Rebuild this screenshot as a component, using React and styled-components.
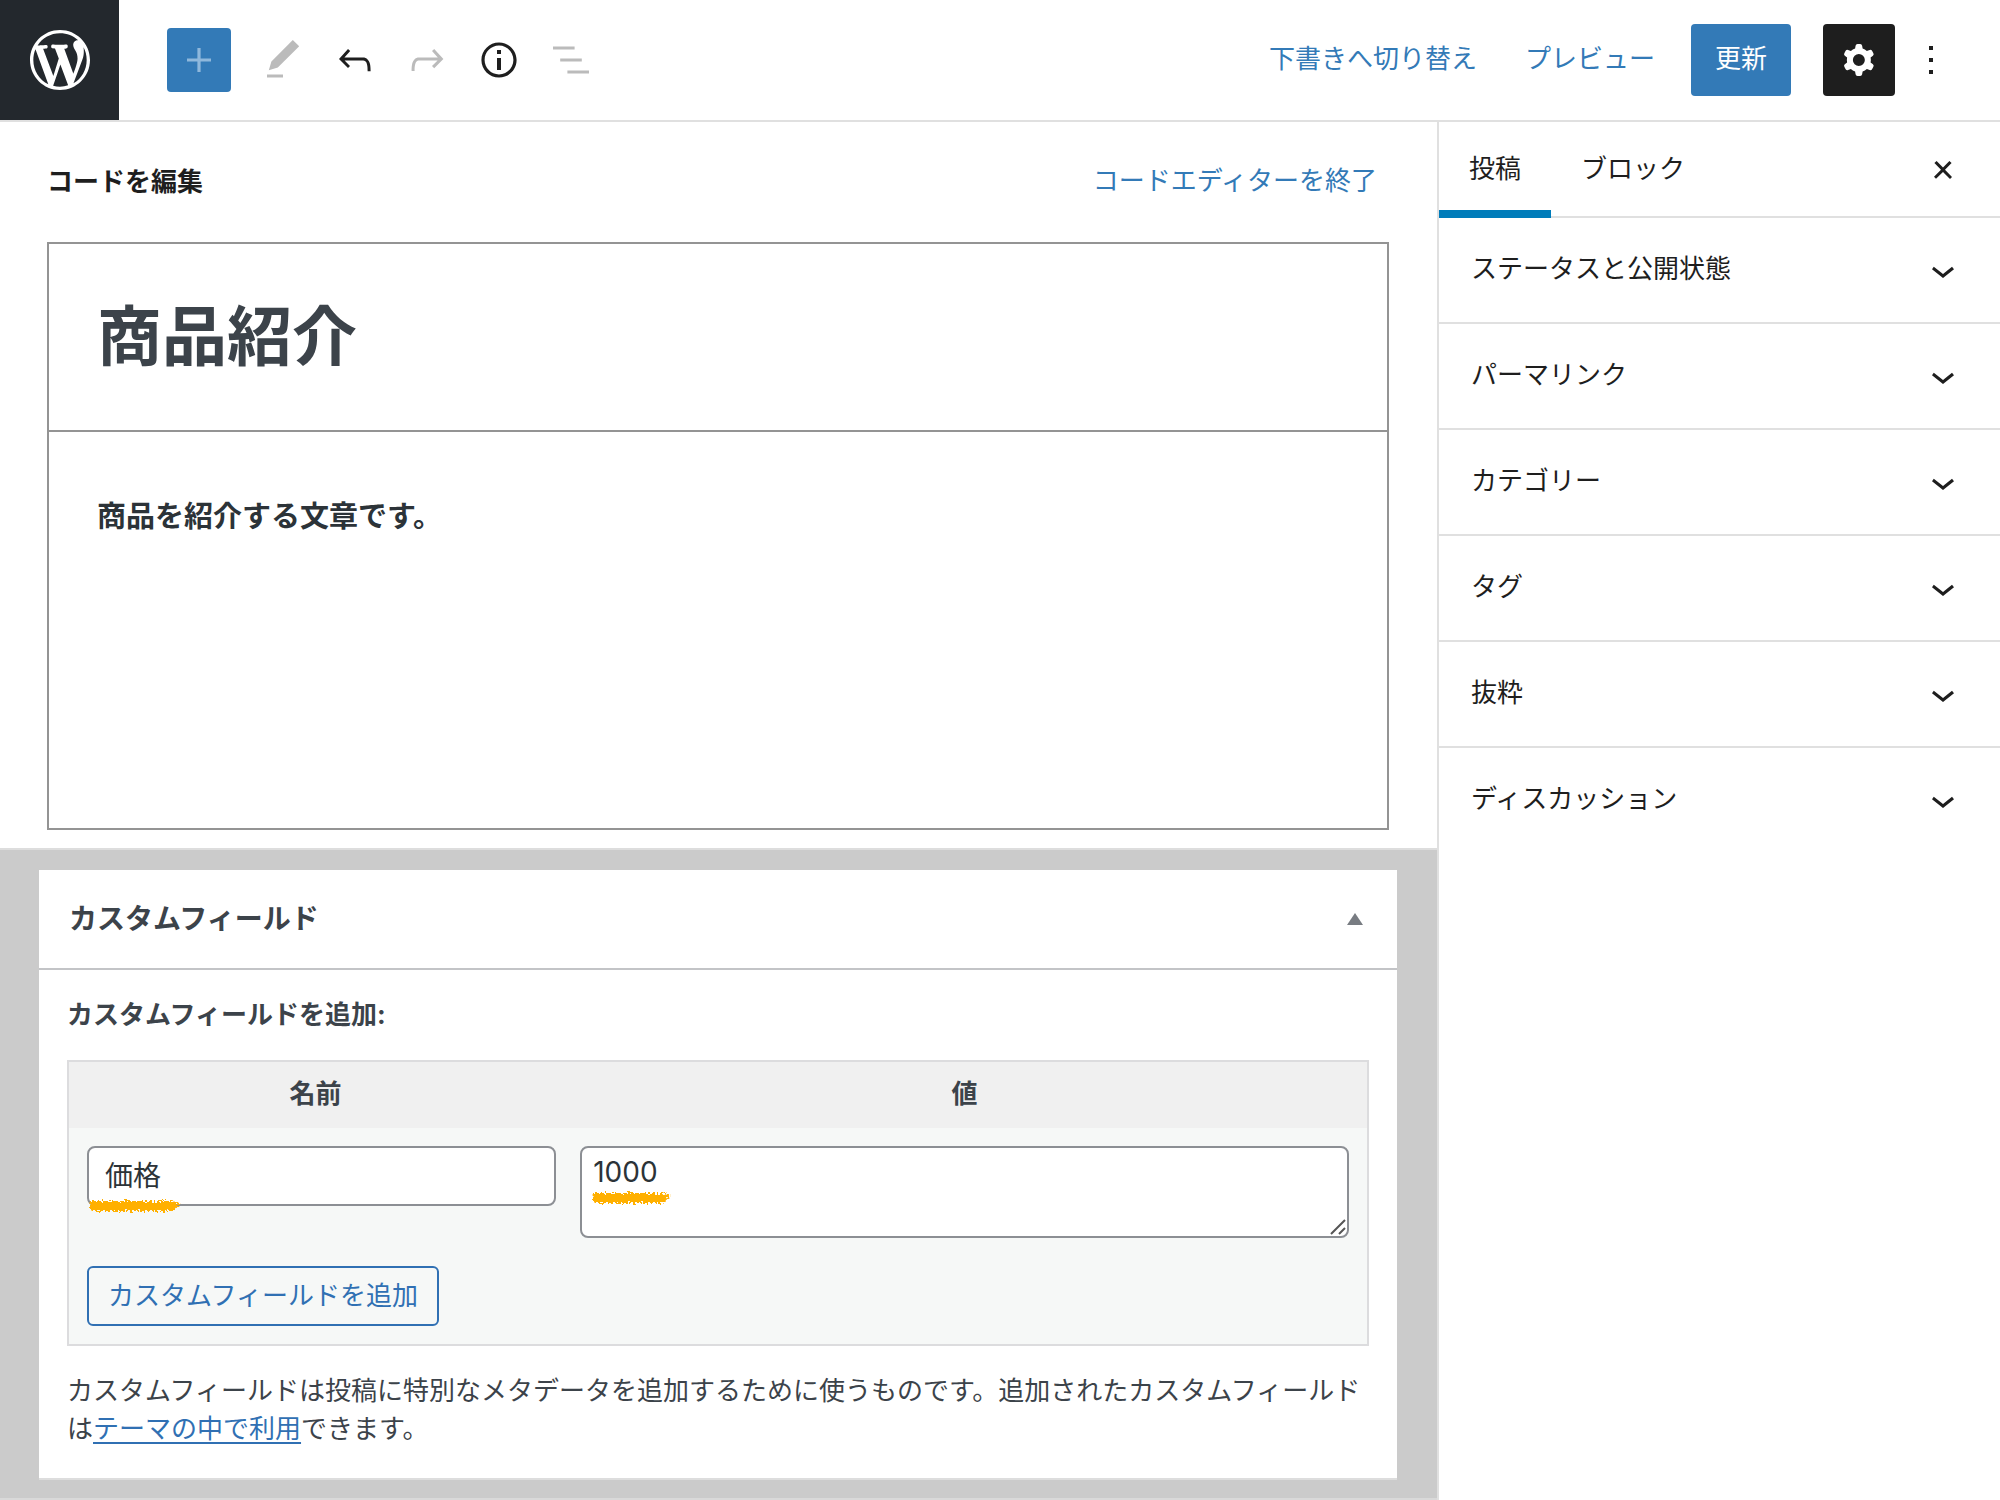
import React from "react";
import styled, { createGlobalStyle } from "styled-components";

const GlobalStyle = createGlobalStyle`
  *, *::before, *::after { box-sizing: border-box; }
  body {
    margin: 0;
    background: #fff;
    color: #1e1e1e;
    font-family: Inter, "Noto Sans CJK JP", sans-serif;
    font-size: 26px;
    line-height: 38px;
  }
  button, input, textarea { font: inherit; color: inherit; margin: 0; }
  button { background: none; border: 0; padding: 0; cursor: pointer; }
`;

const Page = styled.div`
  min-height: 100vh;
  display: flex;
  flex-direction: column;
`;

const Header = styled.header`
  display: flex;
  align-items: center;
  height: 122px;
  padding-right: 33px;
  border-bottom: 2px solid #e0e0e0;
`;

const Logo = styled.a`
  display: flex;
  align-items: center;
  justify-content: center;
  align-self: stretch;
  width: 119px;
  background: #23282d;
  color: #fff;
`;

const Toolbar = styled.div`
  display: flex;
  align-items: center;
  flex: 1;
  padding-left: 48px;
`;

const Actions = styled.div`
  display: flex;
  align-items: center;
`;

const InserterButton = styled.button`
  display: flex;
  align-items: center;
  justify-content: center;
  width: 64px;
  height: 64px;
  margin-right: 16px;
  border-radius: 4px;
  background: #337ab7;
  color: #8fb8dc;
`;

const IconButton = styled.button`
  display: flex;
  align-items: center;
  justify-content: center;
  width: 72px;
  height: 72px;
  border-radius: 4px;
  color: ${(p) => (p.$active ? "#fff" : p.disabled ? "#bbb" : "#1e1e1e")};
  background: ${(p) => (p.$active ? "#1e1e1e" : "transparent")};
`;

const TextButton = styled.button`
  height: 72px;
  padding: 0 24px 2px;
  color: #337ab7;
`;

const PrimaryButton = styled(TextButton)`
  margin: 0 32px 0 12px;
  border-radius: 4px;
  background: #337ab7;
  color: #fff;
`;

const Body = styled.div`
  display: grid;
  grid-template-columns: 1fr 563px;
  flex: 1;
`;

const Main = styled.main`
  display: flex;
  flex-direction: column;
  min-width: 0;
`;

const Editor = styled.section`
  padding: 0 48px 18px 47px;
`;

const EditorHead = styled.div`
  display: flex;
  align-items: center;
  justify-content: space-between;
  height: 120px;
`;

const EditorTitle = styled.h2`
  margin: 0;
  font-size: 26px;
  font-weight: 700;
`;

const ExitButton = styled.button`
  padding: 0 12px 2px;
  color: #337ab7;
`;

const TitleInput = styled.input`
  display: block;
  width: 100%;
  height: 190px;
  padding: 0 48px 10px;
  border: 2px solid #949494;
  border-radius: 0;
  color: #3c434a;
  font-size: 65px;
  font-weight: 700;
`;

const CodeArea = styled.textarea`
  display: block;
  width: 100%;
  height: 398px;
  padding: 66px 48px;
  border: 2px solid #949494;
  border-top: 0;
  border-radius: 0;
  color: #2c3338;
  font-size: 29px;
  font-weight: 600;
  resize: none;
`;

const MetaArea = styled.section`
  flex: 1;
  padding: 20px 40px 18px 39px;
  border-top: 2px solid #ddd;
  border-bottom: 2px solid #d9d9d9;
  background: #cbcbcb;
`;

const MetaBox = styled.div`
  border-bottom: 2px solid #ddd;
  background: #fff;
`;

const MetaHead = styled.div`
  display: flex;
  align-items: center;
  justify-content: space-between;
  height: 100px;
  padding: 0 34px 0 30px;
  border-bottom: 2px solid #c3c4c7;
`;

const MetaTitle = styled.h2`
  margin: 0;
  color: #3c434a;
  font-size: 28px;
  font-weight: 700;
`;

const ToggleButton = styled.button`
  display: flex;
  color: #787c82;
`;

const MetaBody = styled.div`
  padding: 26px 28px 30px;
  color: #3c434a;
`;

const AddHeading = styled.p`
  margin: 0 0 26px;
  font-weight: 700;
`;

const FieldTable = styled.table`
  width: 100%;
  table-layout: fixed;
  border: 2px solid #dcdcde;
  border-collapse: separate;
  border-spacing: 0;
  background: #f6f8f7;
`;

const HeadCell = styled.th`
  width: ${(p) => p.$width};
  height: 66px;
  padding: 0 0 2px;
  background: #f0f0f0;
  font-weight: 700;
  text-align: center;
`;

const Cell = styled.td`
  padding: ${(p) => p.$padding};
  vertical-align: top;
`;

const Field = styled.div`
  position: relative;
`;

const NameInput = styled.input`
  display: block;
  width: 100%;
  height: 60px;
  padding: 0 16px 4px;
  border: 2px solid #8c8f94;
  border-radius: 8px;
  background: #fff;
  color: #2c3338;
  font-size: 28px;
`;

const ValueArea = styled.textarea`
  display: block;
  width: 100%;
  height: 92px;
  padding: 5px 11px;
  border: 2px solid #8c8f94;
  border-radius: 8px;
  background: #fff;
  color: #2c3338;
  font-size: 28px;
  resize: none;
`;

const Grip = styled.svg`
  position: absolute;
  right: 3px;
  bottom: 3px;
  pointer-events: none;
`;

const Marker = styled.svg`
  position: absolute;
  left: ${(p) => p.$left}px;
  top: ${(p) => p.$top}px;
  overflow: visible;
  pointer-events: none;
`;

const AddButton = styled.button`
  height: 60px;
  padding: 0 19px;
  border: 2px solid #3070b3;
  border-radius: 6px;
  color: #3070b3;
`;

const Help = styled.p`
  margin: 26px 0 0;
`;

const HelpLink = styled.a`
  color: #3070b3;
  text-decoration: underline;
  text-underline-offset: 4px;
`;

const Sidebar = styled.aside`
  border-left: 2px solid #e0e0e0;
`;

const TabBar = styled.div`
  display: flex;
  align-items: center;
  height: 96px;
  padding-right: 33px;
  box-shadow: inset 0 -2px #e0e0e0;
`;

const Tab = styled.button`
  height: 96px;
  padding: 0 30px 2px;
  box-shadow: ${(p) => (p.$active ? "inset 0 -8px #007cba" : "none")};
`;

const CloseButton = styled.button`
  display: flex;
  margin-left: auto;
`;

const Panel = styled.button`
  display: flex;
  align-items: center;
  justify-content: space-between;
  width: 100%;
  height: 106px;
  padding: 0 33px 0 32px;
  border-bottom: ${(p) => (p.$last ? "2px solid transparent" : "2px solid #e0e0e0")};
`;

const PanelLabel = styled.span`
  padding-bottom: 2px;
`;

const Icon = ({ d, size = 48, viewBox = "0 0 24 24" }) => (
  <svg width={size} height={size} viewBox={viewBox} fill="currentColor" aria-hidden="true">
    <path fillRule="evenodd" clipRule="evenodd" d={d} />
  </svg>
);

const icons = {
  wordpress:
    "M20 10c0-5.51-4.49-10-10-10C4.48 0 0 4.49 0 10c0 5.52 4.48 10 10 10 5.51 0 10-4.48 10-10zM7.78 15.37L4.37 6.22c.55-.02 1.17-.08 1.17-.08.5-.06.44-1.13-.06-1.11 0 0-1.45.11-2.37.11-.18 0-.37 0-.58-.01C4.12 2.69 6.87 1.11 10 1.11c2.33 0 4.45.87 6.05 2.34-.68-.11-1.65.39-1.65 1.58 0 .74.45 1.36.9 2.1.35.61.55 1.36.55 2.46 0 1.49-1.4 5-1.4 5l-3.03-8.37c.54-.02.82-.17.82-.17.5-.05.44-1.25-.06-1.22 0 0-1.44.12-2.38.12-.87 0-2.33-.12-2.33-.12-.5-.03-.56 1.2-.06 1.22l.92.08 1.26 3.41zM17.41 10c.24-.64.74-1.87.43-4.25.7 1.29 1.05 2.71 1.05 4.25 0 3.29-1.73 6.24-4.4 7.78.97-2.59 1.94-5.2 2.92-7.78zM6.1 18.09C3.12 16.65 1.11 13.53 1.11 10c0-1.3.23-2.48.72-3.59C3.25 10.3 4.67 14.2 6.1 18.09zm4.03-6.63l2.58 6.98c-.86.29-1.76.45-2.71.45-.79 0-1.57-.11-2.29-.33.81-2.38 1.62-4.74 2.42-7.1z",
  plus: "M18 11.2h-5.2V6h-1.6v5.2H6v1.6h5.2V18h1.6v-5.2H18z",
  pencil: "M20.1 5.1L16.9 2 6.2 12.7l-1.3 4.4 4.5-1.3L20.1 5.1zM4 20.8h8v-1.5H4v1.5z",
  undo: "M18.3 11.7c-.6-.6-1.4-.9-2.3-.9H6.7l2.9-3.3-1.1-1-4.5 5L8.5 16l1-1-2.7-2.7H16c.5 0 .9.2 1.3.5 1 1 1 3.4 1 4.5v.3h1.5v-.2c0-1.5 0-4.3-1.5-5.7z",
  redo: "M15.6 6.5l-1.1 1 2.9 3.3H8c-.9 0-1.7.3-2.3.9-1.4 1.5-1.4 4.2-1.4 5.6v.2h1.5v-.3c0-1.1 0-3.5 1-4.5.3-.3.7-.5 1.3-.5h9.2L14.5 15l1.1 1.1 4.6-4.6-4.6-5z",
  info: "M12 3.2c-4.8 0-8.8 3.9-8.8 8.8 0 4.8 3.9 8.8 8.8 8.8 4.8 0 8.8-3.9 8.8-8.8 0-4.8-4-8.8-8.8-8.8zm0 16c-4 0-7.2-3.3-7.2-7.2C4.8 8 8 4.8 12 4.8s7.2 3.3 7.2 7.2c0 4-3.2 7.2-7.2 7.2zM11 17h2v-6h-2v6zm0-8h2V7h-2v2z",
  list: "M13.8 5.2H3v1.5h10.8V5.2zm-3.6 12v1.5H21v-1.5H10.2zm7.2-6H6.6v1.5h10.8v-1.5z",
  cog: "M10.289 4.836A1 1 0 0111.275 4h1.306a1 1 0 01.987.836l.244 1.466c.787.26 1.503.679 2.108 1.218l1.393-.522a1 1 0 011.216.437l.653 1.13a1 1 0 01-.23 1.273l-1.148.944a6.025 6.025 0 010 2.435l1.149.946a1 1 0 01.23 1.272l-.653 1.13a1 1 0 01-1.216.437l-1.394-.522c-.605.54-1.32.958-2.108 1.218l-.244 1.466a1 1 0 01-.987.836h-1.306a1 1 0 01-.986-.836l-.244-1.466a5.995 5.995 0 01-2.108-1.218l-1.394.522a1 1 0 01-1.217-.436l-.653-1.131a1 1 0 01.23-1.272l1.149-.946a6.026 6.026 0 010-2.435l-1.148-.944a1 1 0 01-.23-1.272l.653-1.131a1 1 0 011.217-.437l1.393.522a5.994 5.994 0 012.108-1.218l.244-1.466zM14.929 12a3 3 0 11-6 0 3 3 0 016 0z",
  more: "M13 19h-2v-2h2v2zm0-6h-2v-2h2v2zm0-6h-2V5h2v2z",
  close: "M13 11.9l3.3-3.4-1.1-1-3.2 3.3-3.2-3.3-1.1 1 3.3 3.4-3.5 3.5 1 1L12 13l3.5 3.5 1-1-3.5-3.6z",
  chevron: "M17.5 11.6L12 16l-5.5-4.4.9-1.2L12 14l4.5-3.6 1 1.2z",
};

const tools = [
  { icon: "pencil", label: "ツール", disabled: true },
  { icon: "undo", label: "元に戻す" },
  { icon: "redo", label: "やり直す", disabled: true },
  { icon: "info", label: "詳細" },
  { icon: "list", label: "リスト表示", disabled: true },
];

const panels = ["ステータスと公開状態", "パーマリンク", "カテゴリー", "タグ", "抜粋", "ディスカッション"];

/* Crayon-like highlighter stroke: the turbulence roughens its edges. */
function Highlight({ id, width, left, top }) {
  return (
    <Marker $left={left} $top={top} width={width} height="14" aria-hidden="true">
      <filter id={id} x="-10%" y="-50%" width="120%" height="200%">
        <feTurbulence type="fractalNoise" baseFrequency="0.4" numOctaves="2" seed="4" result="noise" />
        <feDisplacementMap in="SourceGraphic" in2="noise" scale="8" xChannelSelector="R" yChannelSelector="G" />
      </filter>
      <path
        fill="#ffb005"
        filter={`url(#${id})`}
        d={`M2 2H${width - 8}L${width} 5L${width - 8} 12H4L1 9Z`}
      />
    </Marker>
  );
}

export default function App() {
  return (
    <Page>
      <GlobalStyle />
      <Header>
        <Logo href="#" aria-label="WordPress">
          <Icon d={icons.wordpress} size={72} viewBox="-2 -2 24 24" />
        </Logo>
        <Toolbar>
          <InserterButton aria-label="ブロックを追加">
            <Icon d={icons.plus} />
          </InserterButton>
          {tools.map((t) => (
            <IconButton key={t.icon} aria-label={t.label} disabled={t.disabled}>
              <Icon d={icons[t.icon]} />
            </IconButton>
          ))}
        </Toolbar>
        <Actions>
          <TextButton>下書きへ切り替え</TextButton>
          <TextButton>プレビュー</TextButton>
          <PrimaryButton>更新</PrimaryButton>
          <IconButton $active aria-label="設定">
            <Icon d={icons.cog} />
          </IconButton>
          <IconButton aria-label="オプション">
            <Icon d={icons.more} />
          </IconButton>
        </Actions>
      </Header>

      <Body>
        <Main>
          <Editor>
            <EditorHead>
              <EditorTitle>コードを編集</EditorTitle>
              <ExitButton>コードエディターを終了</ExitButton>
            </EditorHead>
            <TitleInput aria-label="タイトル" defaultValue="商品紹介" />
            <CodeArea aria-label="本文" defaultValue="商品を紹介する文章です。" />
          </Editor>

          <MetaArea>
            <MetaBox>
              <MetaHead>
                <MetaTitle>カスタムフィールド</MetaTitle>
                <ToggleButton aria-label="パネルを切り替え">
                  <svg width="16" height="12" viewBox="0 0 16 12" fill="currentColor" aria-hidden="true">
                    <path d="M8 0l8 12H0z" />
                  </svg>
                </ToggleButton>
              </MetaHead>
              <MetaBody>
                <AddHeading>カスタムフィールドを追加:</AddHeading>
                <FieldTable>
                  <thead>
                    <tr>
                      <HeadCell $width="38%">
                        <label htmlFor="field-name">名前</label>
                      </HeadCell>
                      <HeadCell $width="62%">
                        <label htmlFor="field-value">値</label>
                      </HeadCell>
                    </tr>
                  </thead>
                  <tbody>
                    <tr>
                      <Cell $padding="18px 6px 28px 18px">
                        <Field>
                          <NameInput id="field-name" type="text" defaultValue="価格" />
                          <Highlight id="rough-name" width={92} left={1} top={53} />
                        </Field>
                      </Cell>
                      <Cell $padding="18px 18px 28px">
                        <Field>
                          <ValueArea id="field-value" defaultValue="1000" />
                          <Grip width="16" height="16" viewBox="0 0 16 16" fill="none" stroke="#555" strokeWidth="2" aria-hidden="true">
                            <path d="M1 15L15 1M9 15l6-6" />
                          </Grip>
                          <Highlight id="rough-value" width={80} left={11} top={45} />
                        </Field>
                      </Cell>
                    </tr>
                    <tr>
                      <Cell colSpan={2} $padding="0 18px 18px">
                        <AddButton>カスタムフィールドを追加</AddButton>
                      </Cell>
                    </tr>
                  </tbody>
                </FieldTable>
                <Help>
                  カスタムフィールドは投稿に特別なメタデータを追加するために使うものです。追加されたカスタムフィールドは
                  <HelpLink href="#">テーマの中で利用</HelpLink>できます。
                </Help>
              </MetaBody>
            </MetaBox>
          </MetaArea>
        </Main>

        <Sidebar>
          <TabBar>
            <Tab $active>投稿</Tab>
            <Tab>ブロック</Tab>
            <CloseButton aria-label="設定を閉じる">
              <Icon d={icons.close} />
            </CloseButton>
          </TabBar>
          {panels.map((name, i) => (
            <Panel key={name} $last={i === panels.length - 1} aria-expanded="false">
              <PanelLabel>{name}</PanelLabel>
              <Icon d={icons.chevron} />
            </Panel>
          ))}
        </Sidebar>
      </Body>
    </Page>
  );
}
